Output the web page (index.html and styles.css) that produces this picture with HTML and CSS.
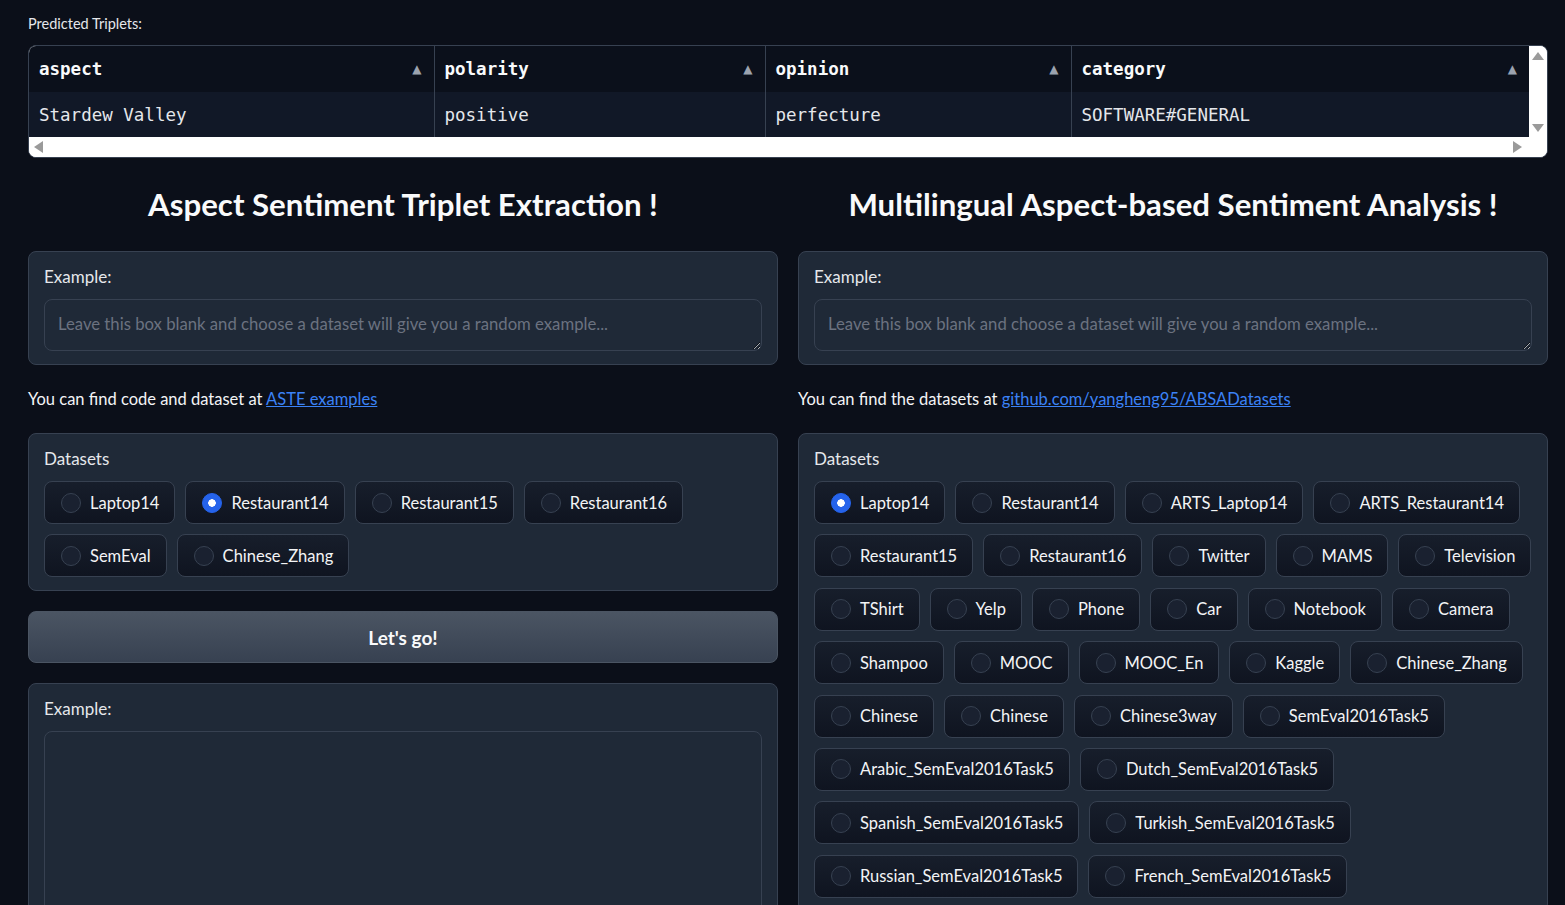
FILE: index.html
```html
<!DOCTYPE html>
<html lang="en">
<head>
<meta charset="utf-8">
<title>ABSA Demo</title>
<link rel="stylesheet" href="styles.css">
</head>
<body>
<div class="page">
  <div class="output-block">
    <div class="block-label">Predicted Triplets:</div>
    <div class="table-frame">
      <div class="table-main">
        <table class="triplets">
          <colgroup>
            <col class="c1"><col class="c2"><col class="c3"><col class="c4">
          </colgroup>
          <thead>
            <tr>
              <th><div class="th-in"><span>aspect</span><span class="sort">▲</span></div></th>
              <th><div class="th-in"><span>polarity</span><span class="sort">▲</span></div></th>
              <th><div class="th-in"><span>opinion</span><span class="sort">▲</span></div></th>
              <th><div class="th-in"><span>category</span><span class="sort">▲</span></div></th>
            </tr>
          </thead>
          <tbody>
            <tr>
              <td>Stardew Valley</td>
              <td>positive</td>
              <td>perfecture</td>
              <td>SOFTWARE#GENERAL</td>
            </tr>
          </tbody>
        </table>
        <div class="hscroll"><span class="tri tri-left"></span><span class="tri tri-right"></span></div>
      </div>
      <div class="vscroll"><span class="tri tri-up"></span><span class="tri tri-down"></span></div>
    </div>
  </div>

  <div class="columns">
    <div class="col">
      <h1 class="title">Aspect Sentiment Triplet Extraction !</h1>
      <div class="panel">
        <div class="panel-label">Example:</div>
        <textarea class="input" rows="1" placeholder="Leave this box blank and choose a dataset will give you a random example..."></textarea>
      </div>
      <p class="note">You can find code and dataset at <a href="#">ASTE examples</a></p>
      <div class="panel panel-radios">
        <div class="panel-label">Datasets</div>
        <div class="radios">
          <label class="radio"><span class="dot"></span>Laptop14</label>
          <label class="radio"><span class="dot on"></span>Restaurant14</label>
          <label class="radio"><span class="dot"></span>Restaurant15</label>
          <label class="radio"><span class="dot"></span>Restaurant16</label>
          <label class="radio"><span class="dot"></span>SemEval</label>
          <label class="radio"><span class="dot"></span>Chinese_Zhang</label>
        </div>
      </div>
      <button class="go">Let's go!</button>
      <div class="panel">
        <div class="panel-label">Example:</div>
        <textarea class="input tall"></textarea>
      </div>
    </div>

    <div class="col">
      <h1 class="title">Multilingual Aspect-based Sentiment Analysis !</h1>
      <div class="panel">
        <div class="panel-label">Example:</div>
        <textarea class="input" rows="1" placeholder="Leave this box blank and choose a dataset will give you a random example..."></textarea>
      </div>
      <p class="note">You can find the datasets at <a href="#">github.com/yangheng95/ABSADatasets</a></p>
      <div class="panel panel-radios">
        <div class="panel-label">Datasets</div>
        <div class="radios">
          <label class="radio"><span class="dot on"></span>Laptop14</label>
          <label class="radio"><span class="dot"></span>Restaurant14</label>
          <label class="radio"><span class="dot"></span>ARTS_Laptop14</label>
          <label class="radio"><span class="dot"></span>ARTS_Restaurant14</label>
          <label class="radio"><span class="dot"></span>Restaurant15</label>
          <label class="radio"><span class="dot"></span>Restaurant16</label>
          <label class="radio"><span class="dot"></span>Twitter</label>
          <label class="radio"><span class="dot"></span>MAMS</label>
          <label class="radio"><span class="dot"></span>Television</label>
          <label class="radio"><span class="dot"></span>TShirt</label>
          <label class="radio"><span class="dot"></span>Yelp</label>
          <label class="radio"><span class="dot"></span>Phone</label>
          <label class="radio"><span class="dot"></span>Car</label>
          <label class="radio"><span class="dot"></span>Notebook</label>
          <label class="radio"><span class="dot"></span>Camera</label>
          <label class="radio"><span class="dot"></span>Shampoo</label>
          <label class="radio"><span class="dot"></span>MOOC</label>
          <label class="radio"><span class="dot"></span>MOOC_En</label>
          <label class="radio"><span class="dot"></span>Kaggle</label>
          <label class="radio"><span class="dot"></span>Chinese_Zhang</label>
          <label class="radio"><span class="dot"></span>Chinese</label>
          <label class="radio"><span class="dot"></span>Chinese</label>
          <label class="radio"><span class="dot"></span>Chinese3way</label>
          <label class="radio"><span class="dot"></span>SemEval2016Task5</label>
          <label class="radio"><span class="dot"></span>Arabic_SemEval2016Task5</label>
          <label class="radio"><span class="dot"></span>Dutch_SemEval2016Task5</label>
          <label class="radio"><span class="dot"></span>Spanish_SemEval2016Task5</label>
          <label class="radio"><span class="dot"></span>Turkish_SemEval2016Task5</label>
          <label class="radio"><span class="dot"></span>Russian_SemEval2016Task5</label>
          <label class="radio"><span class="dot"></span>French_SemEval2016Task5</label>
        </div>
      </div>
    </div>
  </div>
</div>
</body>
</html>
```

FILE: styles.css
```css
* { box-sizing: border-box; }

html, body {
  margin: 0;
  background: #0b0f19;
  color: #f3f4f6;
  font-family: Lato, "Noto Sans", sans-serif;
  overflow: hidden;
}

.page {
  padding: 13px 17px 0 28px;
}

.block-label {
  font-size: 14.5px;
  line-height: 22px;
  color: #e5e7eb;
  margin-bottom: 10px;
}

/* ---------- table ---------- */
.table-frame {
  display: flex;
  border: 1px solid #374151;
  border-radius: 8px;
  overflow: hidden;
  background: #ffffff;
  width: 1520px;
}

.table-main {
  width: 1500px;
  display: flex;
  flex-direction: column;
}

.triplets {
  border-collapse: collapse;
  table-layout: fixed;
  width: 1500px;
  font-family: "DejaVu Sans Mono", "Liberation Mono", monospace;
  font-size: 17.5px;
}

.c1 { width: 405px; }
.c2 { width: 331px; }
.c3 { width: 306px; }
.c4 { width: 458px; }

.triplets th {
  background: #0b101b;
  color: #f9fafb;
  height: 46px;
  padding: 0 12px 0 10px;
  text-align: left;
  font-weight: 700;
  border-right: 1px solid #374151;
}

.triplets th:last-child, .triplets td:last-child { border-right: none; }

.th-in {
  display: flex;
  justify-content: space-between;
  align-items: center;
}

.sort {
  color: #9ca3af;
  font-size: 12px;
  font-family: "DejaVu Sans", sans-serif;
}

.triplets td {
  background: #111827;
  color: #e5e7eb;
  height: 45px;
  padding: 0 10px;
  border-right: 1px solid #374151;
}

.hscroll {
  height: 20px;
  background: #ffffff;
  display: flex;
  justify-content: space-between;
  align-items: center;
  padding: 0 7px 0 5px;
}

.vscroll {
  width: 18px;
  background: #ffffff;
  display: flex;
  flex-direction: column;
  align-items: center;
  padding-top: 6px;
  gap: 64px;
}

.tri { width: 0; height: 0; display: block; }
.tri-left { border-top: 6px solid transparent; border-bottom: 6px solid transparent; border-right: 9px solid #9a9a9a; }
.tri-right { border-top: 6px solid transparent; border-bottom: 6px solid transparent; border-left: 9px solid #9a9a9a; }
.tri-up { border-left: 6px solid transparent; border-right: 6px solid transparent; border-bottom: 8px solid #9a9a9a; }
.tri-down { border-left: 6px solid transparent; border-right: 6px solid transparent; border-top: 8px solid #9a9a9a; }

/* ---------- columns ---------- */
.columns {
  display: grid;
  grid-template-columns: 750px 750px;
  gap: 20px;
  margin-top: 19px;
}

.col {
  display: flex;
  flex-direction: column;
  gap: 20px;
}

.title {
  margin: 0;
  text-align: center;
  font-size: 31.2px;
  line-height: 54px;
  font-weight: 700;
  color: #f9fafb;
}

.panel {
  background: #1f2937;
  border: 1px solid #374151;
  border-radius: 8px;
  padding: 13px 15px 13px;
}

.panel-radios {
  padding-bottom: 13px;
}

.panel-label {
  font-size: 17px;
  line-height: 24px;
  color: #e5e7eb;
  margin-bottom: 10px;
}

.input {
  display: block;
  width: 100%;
  height: 52px;
  resize: vertical;
  background: #1f2937;
  border: 1px solid #374151;
  border-radius: 8px;
  color: #e5e7eb;
  font-family: Lato, "Noto Sans", sans-serif;
  font-size: 16.7px;
  line-height: 24px;
  padding: 12px 13px;
  color-scheme: dark;
  outline: none;
}

.input::placeholder { color: #6b7280; }

.input.tall { height: 400px; }

.note {
  margin: 0;
  font-size: 16.5px;
  line-height: 28px;
  color: #f3f4f6;
}

.note a { color: #3b82f6; text-decoration: underline; }

.radios {
  display: flex;
  flex-wrap: wrap;
  gap: 10.4px 10px;
  margin-top: 1px;
}

.radio {
  display: flex;
  align-items: center;
  gap: 9px;
  height: 43px;
  padding: 0 15px 0 16px;
  border: 1px solid #374151;
  border-radius: 8px;
  background: linear-gradient(to bottom, #171e2b, #0f1420);
  font-size: 16.5px;
  color: #f3f4f6;
}

.dot {
  width: 20px;
  height: 20px;
  border-radius: 50%;
  border: 1px solid #374151;
  background: #1a2130;
  flex-shrink: 0;
}

.dot.on {
  background: #2563eb radial-gradient(circle, #ffffff 0 3.5px, transparent 4px);
  border-color: #2563eb;
}

.go {
  height: 52px;
  border: 1px solid #4b5563;
  border-radius: 8px;
  background: linear-gradient(to bottom, #4b5563, #374151);
  color: #f9fafb;
  font-family: Lato, "Noto Sans", sans-serif;
  font-size: 19px;
  font-weight: 700;
}
```
